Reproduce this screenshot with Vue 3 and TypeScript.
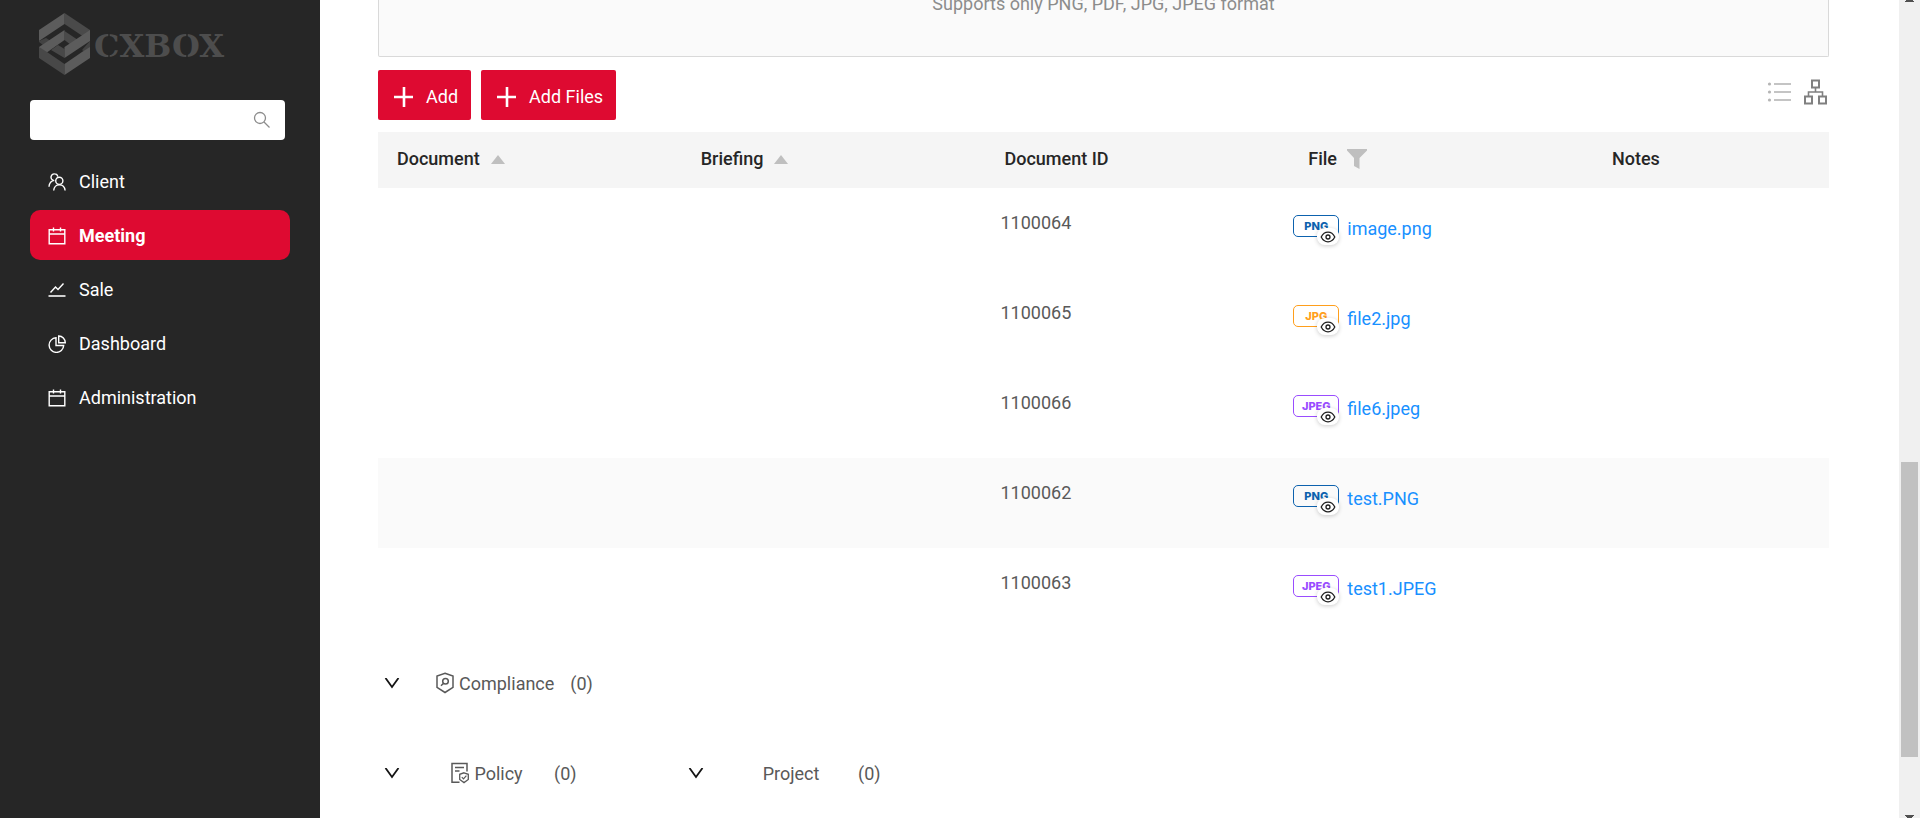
<script setup lang="ts">
import { ref } from 'vue'

interface MenuItem { label: string; icon: 'team' | 'calendar' | 'chart' | 'pie'; active?: boolean }
interface FileRow { id: string; type: 'PNG' | 'JPG' | 'JPEG'; name: string; hovered?: boolean }
interface Group { label: string; icon?: 'shield' | 'policy'; count: number }

const search = ref('')

const menu: MenuItem[] = [
  { label: 'Client', icon: 'team' },
  { label: 'Meeting', icon: 'calendar', active: true },
  { label: 'Sale', icon: 'chart' },
  { label: 'Dashboard', icon: 'pie' },
  { label: 'Administration', icon: 'calendar' },
]

const rows: FileRow[] = [
  { id: '1100064', type: 'PNG', name: 'image.png' },
  { id: '1100065', type: 'JPG', name: 'file2.jpg' },
  { id: '1100066', type: 'JPEG', name: 'file6.jpeg' },
  { id: '1100062', type: 'PNG', name: 'test.PNG', hovered: true },
  { id: '1100063', type: 'JPEG', name: 'test1.JPEG' },
]

const groupRows: Group[][] = [
  [{ label: 'Compliance', icon: 'shield', count: 0 }],
  [
    { label: 'Policy', icon: 'policy', count: 0 },
    { label: 'Project', count: 0 },
  ],
]
</script>

<template>
  <div class="app">
    <aside class="sidebar">
      <a class="logo" href="#" aria-label="CXBOX">
        <svg width="192" height="64" viewBox="0 0 192 64">
          <path fill="#4a4a4a" d="M26.500 0 52 17v11L26.500 11z" />
          <path fill="#5c5c5c" d="M26.500 0 1 17v11l25.500-17z" />
          <path fill="#424242" d="M1 28v1l8 6 7-5-8-5zM52 28v15l-8-6z" />
          <path fill="#4a4a4a" d="M26.500 18 40 27l-7 5-6.500-5z" />
          <path fill="#5c5c5c" d="M1 34 26.500 17v10L1 45z" />
          <path fill="#484848" d="M13 37l7-5 6.500 4v9z" />
          <path fill="#5c5c5c" d="M26.500 34 52 17v11L26.500 45z" />
          <path fill="#484848" d="M1 34v11l25.500 17V51L9 39z" />
          <path fill="#5c5c5c" d="M52 34v11L26.500 62V51L44 39z" />
          <text class="logo-text" x="56" y="44">CXBOX</text>
          <path stroke="#262626" stroke-width="1.500" d="M71 19v6M71 39v7M149 19v6M149 39v7" />
        </svg>
      </a>

      <label class="search">
        <input v-model="search" type="text" aria-label="Search" />
        <svg width="18" height="18" viewBox="0 0 18 18" fill="none" stroke="#8c8c8c" stroke-width="1.300">
          <circle cx="7" cy="7" r="5.500" />
          <path d="m11 11 5.500 5.500" />
        </svg>
      </label>

      <nav class="menu">
        <a v-for="item in menu" :key="item.label" href="#" class="menu-item" :class="{ active: item.active }">
          <svg width="18" height="18" viewBox="0 0 18 18" fill="none" stroke="currentColor" stroke-width="1.400">
            <template v-if="item.icon === 'team'">
              <circle cx="11.300" cy="7.800" r="3.600" />
              <path d="M5.700 17.500c.2-3.300 2.400-5.800 5.600-5.800s5.600 2.500 5.800 5.800M9.800 3.700C9.500 2 8.300.9 6.600.9a3.300 3.300 0 0 0-1.800 6.200c.4.300 1 .5 1.500.5M5.200 7.400C2.600 8.500 1.200 10.800 1 13.800" />
            </template>
            <template v-else-if="item.icon === 'calendar'">
              <path d="M1.200 2.700h15.600v14H1.200zM1.200 7h15.600M5.500.5v4M12.500.5v4" />
            </template>
            <template v-else-if="item.icon === 'chart'">
              <path d="m2.500 11.500 5-5.500 2.500 2.500 5.500-6" />
              <path stroke="#cfcfcf" stroke-width="2" d="M.5 15h17" />
            </template>
            <template v-else>
              <path d="M8 2.800A7.300 7.300 0 1 0 15.700 10.500H8z" />
              <path d="M10.700 1v6.800h6.600A6.800 6.800 0 0 0 10.700 1z" />
            </template>
          </svg>
          <span>{{ item.label }}</span>
        </a>
      </nav>
    </aside>

    <main class="content">
      <div class="dropzone">Supports only PNG, PDF, JPG, JPEG format</div>

      <div class="toolbar">
        <button type="button" class="primary">
          <svg width="20" height="20" viewBox="0 0 20 20" stroke="#fff" stroke-width="2.600"><path d="M10 0v20M0 10h19" /></svg>
          Add
        </button>
        <button type="button" class="primary">
          <svg width="20" height="20" viewBox="0 0 20 20" stroke="#fff" stroke-width="2.600"><path d="M10 0v20M0 10h19" /></svg>
          Add Files
        </button>
        <div class="views">
          <button type="button" class="plain" aria-label="List view">
            <svg width="24" height="26" viewBox="0 0 24 26">
              <path stroke="#c4c4c4" stroke-width="2" d="M7 5h17M7 13h17M7 21h17" />
              <g fill="#b5b5b5"><circle cx="2.500" cy="5" r="1.600" /><circle cx="2.500" cy="13" r="1.600" /><circle cx="2.500" cy="21" r="1.600" /></g>
            </svg>
          </button>
          <button type="button" class="plain" aria-label="Tree view">
            <svg width="24" height="26" viewBox="0 0 24 26" fill="none" stroke="#808080" stroke-width="2">
              <path d="M8 1.500h7v7H8zM1 17.500h7v7H1zM15 17.500h7v7h-7z" />
              <path stroke-width="1.600" d="M11.500 9v4M4.500 17v-4h14v4" />
            </svg>
          </button>
        </div>
      </div>

      <table class="files">
        <colgroup><col /><col /><col /><col /><col class="last" /></colgroup>
        <thead>
          <tr>
            <th scope="col"><span class="head">Document
              <svg width="14" height="9" viewBox="0 0 14 9"><path fill="#bfbfbf" d="M7 0l7 9H0z" /></svg></span></th>
            <th scope="col"><span class="head">Briefing
              <svg width="14" height="9" viewBox="0 0 14 9"><path fill="#bfbfbf" d="M7 0l7 9H0z" /></svg></span></th>
            <th scope="col"><span class="head">Document ID</span></th>
            <th scope="col"><span class="head filter">File
              <svg width="20" height="20" viewBox="0 0 20 20"><path fill="#bfbfbf" d="M0 0h20v1.500L12.500 9v11L7 17V9L0 1.500z" /></svg></span></th>
            <th scope="col"><span class="head">Notes</span></th>
          </tr>
        </thead>
        <tbody>
          <tr v-for="row in rows" :key="row.id" :class="{ hovered: row.hovered }">
            <td></td>
            <td></td>
            <td class="doc-id">{{ row.id }}</td>
            <td class="file">
              <div class="file-cell">
                <span class="badge" :class="row.type.toLowerCase()">
                  {{ row.type }}
                  <button type="button" class="preview" aria-label="Preview">
                    <svg width="16" height="12" viewBox="0 0 16 12" fill="none" stroke="#1f1f1f" stroke-width="1.300">
                      <path d="M1.200 6C2.800 2.800 5 1.200 8 1.200S13.200 2.800 14.800 6C13.200 9.200 11 10.800 8 10.800S2.800 9.200 1.200 6z" />
                      <circle cx="8" cy="6" r="2" />
                    </svg>
                  </button>
                </span>
                <a href="#">{{ row.name }}</a>
              </div>
            </td>
            <td></td>
          </tr>
        </tbody>
      </table>

      <div v-for="(groups, i) in groupRows" :key="i" class="group-row">
        <div v-for="group in groups" :key="group.label" class="group">
          <button type="button" class="plain" :aria-label="'Expand ' + group.label">
            <svg width="16" height="12" viewBox="0 0 16 12" fill="none" stroke="#141414" stroke-width="1.800"><path d="m1.500 0 6.500 9 6.500-9" /></svg>
          </button>
          <span class="group-label">
            <svg v-if="group.icon === 'shield'" width="18" height="24" viewBox="0 0 18 24" fill="none" stroke="#595959" stroke-width="1.500">
              <path d="M9 1.300 17 4v11.300L9 20.500 1 15.300V4z" />
              <circle cx="9.500" cy="9.300" r="2.800" />
              <path d="m7.600 11.300-2.600 2.500" />
            </svg>
            <svg v-else-if="group.icon === 'policy'" width="18" height="24" viewBox="0 0 18 24" fill="none" stroke="#595959" stroke-width="1.500">
              <path d="M8.500 20.300H1V1.500h15v8M4 5.500h9M4 9h4.500" />
              <path stroke-width="1.300" d="m13 10.800 4.300 1.500v5.200L13 20.600l-4.300-3.100v-5.200z" />
              <path stroke-width="1.200" d="m10.800 15.200 1.700 1.700 2.900-3.200" />
            </svg>
            {{ group.label }}
          </span>
          <span>({{ group.count }})</span>
        </div>
      </div>
    </main>

    <div class="scrollbar" aria-hidden="true">
      <svg width="9" height="2" viewBox="0 0 9 2" fill="#505050"><path d="M1 0h7v1h1v1H0V1h1z" /></svg>
      <div class="track"><div class="thumb"></div></div>
      <svg width="9" height="3" viewBox="0 0 9 3" fill="#505050"><path d="M0 0h9v1H8v1H7v1H2V2H1V1H0z" /></svg>
    </div>
  </div>
</template>

<style>
body {
  margin: 0;
}
</style>

<style scoped>
.app {
  display: flex;
  min-height: 100vh;
  background: #fff;
  color: #595959;
  font: 18px/22px Roboto, "Liberation Sans", sans-serif;
}
.app * {
  box-sizing: border-box;
}
svg {
  display: block;
  flex: none;
}
button {
  border: 0;
  font: inherit;
  cursor: pointer;
}
.plain {
  padding: 0;
  background: none;
}
.sidebar {
  flex: none;
  width: 320px;
  padding: 13px 30px 0;
  background: #262626;
}
.logo {
  display: block;
  padding-left: 8px;
}
.logo-text {
  fill: #4d4d4d;
  font: bold 32px "DejaVu Serif", serif;
}
.search {
  display: flex;
  align-items: center;
  height: 40px;
  margin: 23px 5px 16px 0;
  padding: 0 14px 0 12px;
  border-radius: 4px;
  background: #fff;
}
.search input {
  flex: 1;
  min-width: 0;
  border: 0;
  outline: 0;
  background: none;
  font: inherit;
}
.menu {
  display: flex;
  flex-direction: column;
  gap: 4px;
}
.menu-item {
  display: flex;
  align-items: center;
  gap: 13px;
  height: 50px;
  padding: 1px 18px 0;
  border-radius: 10px;
  color: #fff;
  text-decoration: none;
}
.menu-item.active {
  background: #de0a31;
  font-weight: 700;
}
.content {
  flex: 1;
  min-width: 0;
  padding: 0 70px 0 58px;
}
.dropzone {
  height: 57px;
  border: 1px solid #d9d9d9;
  border-top: 0;
  border-radius: 0 0 2px 2px;
  background: #fafafa;
  color: #8c8c8c;
  line-height: 8px;
  text-align: center;
}
.toolbar {
  display: flex;
  gap: 10px;
  padding: 13px 0 12px;
}
.primary {
  display: flex;
  align-items: center;
  gap: 12px;
  height: 50px;
  padding: 3px 13px 0 16px;
  border-radius: 2px;
  background: #de0a31;
  color: #fff;
}
.views {
  display: flex;
  align-items: flex-start;
  gap: 13px;
  margin: 9px 1px 0 auto;
}
.files {
  width: 100%;
  border-collapse: collapse;
  table-layout: fixed;
}
.last {
  width: 236px;
}
th {
  height: 56px;
  padding: 0 19px 2px;
  background: #f5f5f5;
  color: #262626;
  font-weight: 500;
  text-align: left;
}
.head {
  display: flex;
  align-items: center;
  gap: 11px;
}
.head.filter {
  gap: 10px;
}
td {
  height: 90px;
  padding: 24px 15px 0;
  vertical-align: top;
}
.hovered {
  background: #fafafa;
}
.file {
  padding: 27px 4px 0;
}
.file-cell {
  display: flex;
  gap: 8px;
}
.file-cell a {
  padding-top: 3px;
  color: #1890ff;
  text-decoration: none;
}
.badge {
  position: relative;
  width: 46px;
  height: 22px;
  border: 1px solid currentColor;
  border-radius: 5px;
  font: 800 11px/20px Inter, sans-serif;
  text-align: center;
}
.png {
  color: #0d62ae;
}
.jpg {
  color: #ff9f1c;
}
.jpeg {
  color: #9a4dff;
}
.preview {
  position: absolute;
  right: -1px;
  bottom: -9px;
  display: flex;
  align-items: center;
  justify-content: center;
  width: 22px;
  height: 17px;
  padding: 0;
  border-radius: 8px;
  background: #fff;
  box-shadow: 0 1px 4px rgba(0, 0, 0, 0.2);
}
.group-row {
  display: flex;
}
.group {
  display: flex;
  align-items: center;
  width: 304px;
  height: 90px;
  padding: 2px 0 0 6px;
}
.group-label {
  display: flex;
  align-items: center;
  justify-content: center;
  gap: 5px;
  min-width: 134px;
  margin-left: 20px;
  padding: 0 16px;
}
.scrollbar {
  display: flex;
  flex: none;
  flex-direction: column;
  align-items: center;
  width: 21px;
  background: #f0f0f0;
}
.track {
  display: flex;
  flex: 1;
  flex-direction: column;
  width: 17px;
}
.track::before {
  content: "";
  flex: 460;
}
.track::after {
  content: "";
  flex: 58;
}
.thumb {
  flex: 295;
  background: #c1c1c1;
}
</style>
